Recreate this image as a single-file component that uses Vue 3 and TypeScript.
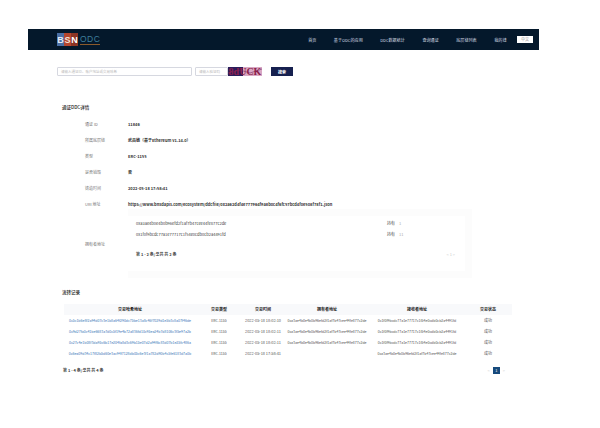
<script setup lang="ts">
const navItems = ['首页', '基于ODC的应用', 'DDC数据统计', '查询通证', '底层链列表', '我的钱']

const fields = [
  { label: '通证 ID', value: '11846' },
  { label: '所属底层链', value: '武昌链（基于Ethereum v1.14.0）' },
  { label: '类型', value: 'ERC-1155' },
  { label: '是否销毁', value: '否' },
  { label: '铸造时间', value: '2022-05-18 17:58:41' },
  { label: 'URI 地址', value: 'https://www.bnsdapis.com/ecosystem/ddcfile/0x2a62d4f4e777964f9a8b0c4f6fc57bcd4f0e508f78f1.json' },
]

const owners = [
  { address: '0xa3ae4b0e4b0b96efd2f1af7b47cee44fe877c2de', count: '1' },
  { address: '0x1f0f9bcdc77a1e77717c1f54e0cdb0cb2a4491fd', count: '11' },
]

const records = [
  { hash: '0x5c1b6e8f2a94d07c3e1b8a64f290dc75be13a8c46f7029d1e5b3c8a07f46de', type: 'ERC-1155', time: '2022-05-18 18:02:10', from: '0xa3ae4b0e4b0b96efd2f1af7b47cee44fe877c2de', to: '0x1f0f9bcdc77a1e77717c1f54e0cdb0cb2a4491fd', status: '成功' },
  { hash: '0x9d27fa0c41be6683a7d0c5f19e4b72a836fd10c95ea24b7d8106c3f5e97a2b', type: 'ERC-1155', time: '2022-05-18 18:02:11', from: '0xa3ae4b0e4b0b96efd2f1af7b47cee44fe877c2de', to: '0x1f0f9bcdc77a1e77717c1f54e0cdb0cb2a4491fd', status: '成功' },
  { hash: '0x27c4e1b08f3da95c6b17e204fa8d3c69b15e07d2a94f6c83d07b1e25fc486a', type: 'ERC-1155', time: '2022-05-18 18:02:11', from: '0xa3ae4b0e4b0b96efd2f1af7b47cee44fe877c2de', to: '0x1f0f9bcdc77a1e77717c1f54e0cdb0cb2a4491fd', status: '成功' },
  { hash: '0x6ea09d34c17f82b5d60e3ac94f7128db05c6e3f1a782d90b4c5fe6183d7a0b', type: 'ERC-1155', time: '2022-05-18 17:58:41', from: '', to: '0xa3ae4b0e4b0b96efd2f1af7b47cee44fe877c2de', status: '成功' },
]
</script>

<template>
  <div class="page">
    <header class="nav">
      <div class="logo">
        <span class="logo-b">B</span><span class="logo-s">S</span><span class="logo-n">N</span>
        <span class="logo-odc">ODC</span>
      </div>
      <nav class="nav-links">
        <a v-for="item in navItems" :key="item">{{ item }}</a>
        <span class="lang">中文</span>
      </nav>
    </header>

    <div class="search">
      <div class="input wide">请输入通证ID、账户地址或交易哈希</div>
      <div class="input short">请输入验证码</div>
      <div class="captcha">
        <svg width="34" height="9" viewBox="0 0 34 9">
          <rect width="34" height="9" fill="#d9a8c4" />
          <rect width="15" height="9" fill="#2b1d5c" />
          <path d="M0 6 L12 3 L22 6 L34 2" stroke="#7a2f6a" stroke-width="0.6" fill="none" />
        </svg>
        <span class="captcha-text">8dUCK</span>
      </div>
      <button class="search-btn">搜索</button>
    </div>

    <section class="detail">
      <h3>通证DDC详情</h3>
      <div v-for="f in fields" :key="f.label" class="field">
        <span class="label">{{ f.label }}</span>
        <span class="value">{{ f.value }}</span>
      </div>
      <div class="owners">
        <span class="label">拥有者地址</span>
        <div class="owners-box">
          <div class="owners-inner">
            <div v-for="o in owners" :key="o.address" class="owner-row">
              <span class="addr">{{ o.address }}</span>
              <span class="count"><b>持有</b>{{ o.count }}</span>
            </div>
            <div class="owners-foot">
              <span class="page-info">第 1 - 2 条/总共 共 2 条</span>
              <span class="pager-dim">&lt; 1 &gt;</span>
            </div>
          </div>
        </div>
      </div>
    </section>

    <section class="records">
      <h3>流转记录</h3>
      <div class="row head">
        <span>交易哈希地址</span>
        <span>交易类型</span>
        <span>交易时间</span>
        <span>拥有者地址</span>
        <span>接收者地址</span>
        <span>交易状态</span>
      </div>
      <div v-for="r in records" :key="r.hash" class="row">
        <span class="hash">{{ r.hash }}</span>
        <span>{{ r.type }}</span>
        <span class="time">{{ r.time }}</span>
        <span>{{ r.from }}</span>
        <span>{{ r.to }}</span>
        <span class="status">{{ r.status }}</span>
      </div>
      <div class="records-foot">
        <span class="page-info">第 1 - 4 条/总共 共 4 条</span>
        <span class="pager">
          <span class="arrow">&lt;</span>
          <span class="current">1</span>
          <span class="arrow">&gt;</span>
        </span>
      </div>
    </section>
  </div>
</template>

<style scoped>
.page {
  width: 600px;
  height: 428px;
  box-sizing: border-box;
  padding: 29px 61px 0 28px;
  overflow: hidden;
  background: #fff;
  font-family: 'Noto Sans CJK SC', 'Liberation Sans', sans-serif;
  font-size: 4px;
  color: #333;
}

.nav {
  height: 21px;
  background: #04182b;
  display: flex;
  align-items: center;
  justify-content: space-between;
  padding: 0 6px 0 29px;
}

.logo {
  display: flex;
  align-items: center;
  font: 700 9px 'Liberation Sans', sans-serif;
  color: #fff;
}

.logo-b {
  width: 7px;
  text-align: center;
  color: #e6ebf4;
  background: #4a6fa5;
  padding: 1.5px 0;
}

.logo-s {
  width: 7px;
  text-align: center;
  color: #f4e2d8;
  background: #b5462e;
  padding: 1.5px 0;
}

.logo-n {
  width: 7px;
  text-align: center;
  color: #fff;
  background: #8c3424;
  padding: 1.5px 0;
}

.logo-odc {
  margin-left: 2px;
  color: #3f7e9c;
  font-weight: 400;
  font-size: 8.5px;
  letter-spacing: 0.5px;
  border-bottom: 0.5px solid #8a5a2c;
}

.nav-links {
  display: flex;
  align-items: center;
  gap: 17.5px;
  color: #d3dae2;
  font-size: 4.1px;
}

.lang {
  width: 16px;
  height: 7px;
  line-height: 7px;
  text-align: center;
  background: #fff;
  color: #999;
  margin-left: -7px;
}

.search {
  display: flex;
  align-items: center;
  height: 9px;
  margin-top: 17px;
  padding-left: 29px;
}

.input {
  box-sizing: border-box;
  height: 9px;
  line-height: 7px;
  padding-left: 3px;
  border: 1px solid #d6d8e0;
  border-radius: 1px;
  color: #bbb;
  font-size: 3.5px;
}

.wide {
  width: 135px;
}

.short {
  width: 33px;
  margin-left: 3px;
}

.captcha {
  position: relative;
  width: 34px;
  height: 9px;
}

.captcha svg {
  display: block;
}

.captcha-text {
  position: absolute;
  inset: 0;
  text-align: center;
  font: 700 10px/9px 'Liberation Serif', serif;
  color: #8c1f4a;
}

.search-btn {
  width: 22px;
  height: 9px;
  margin-left: 9px;
  padding: 0;
  border: 0;
  background: #16204f;
  color: #fff;
  font: 700 4px 'Noto Sans CJK SC', sans-serif;
}

.detail {
  margin-top: 27px;
  padding-left: 34px;
}

h3 {
  margin: 0;
  height: 8px;
  line-height: 8px;
  font-size: 4.5px;
  font-weight: 500;
  color: #222;
}

.field {
  display: flex;
  align-items: center;
  height: 16px;
  padding-left: 23px;
}

.field:first-of-type {
  margin-top: 5px;
}

.label {
  flex: none;
  width: 43px;
  color: #777;
}

.value {
  font-weight: 700;
  color: #333;
  white-space: nowrap;
}

.owners {
  display: flex;
  align-items: center;
  padding-left: 23px;
  margin-top: -3px;
}

.owners-box {
  box-sizing: border-box;
  width: 344px;
  height: 69px;
  padding: 7px 7px 7px 0;
  background: #fcfcfc;
}

.owners-inner {
  height: 100%;
  box-sizing: border-box;
  padding: 2px 0 0 8px;
  background: #fff;
}

.owner-row {
  display: flex;
  justify-content: space-between;
  height: 11px;
  line-height: 11px;
  color: #444;
}

.count {
  width: 78px;
  color: #aaa;
}

.count b {
  color: #666;
  font-weight: 500;
  margin-right: 4px;
}

.owners-foot {
  display: flex;
  justify-content: space-between;
  margin-top: 10.5px;
}

.page-info {
  font-weight: 700;
  color: #444;
}

.pager-dim {
  color: #ccc;
  margin-right: 10px;
}

.records {
  margin-top: 10px;
  padding-left: 34px;
}

.row {
  display: grid;
  grid-template-columns: 132px 46px 42px 86px 94px 48px;
  width: 448px;
  margin-left: 2px;
  height: 11px;
  line-height: 11px;
  text-align: center;
  font-size: 3.5px;
  color: #555;
}

.row span {
  white-space: nowrap;
}

.row .hash {
  color: #3c78b8;
}

.row .time {
  font-size: 3.9px;
}

.row .status {
  font-size: 4px;
}

.head {
  margin-top: 7.5px;
  background: #f8f9fb;
  font-size: 4px;
  font-weight: 700;
  color: #222;
}

.records-foot {
  display: flex;
  align-items: center;
  justify-content: space-between;
  width: 442px;
  height: 9px;
  margin-top: 7px;
  padding-left: 1px;
}

.pager {
  display: flex;
  align-items: center;
  gap: 3px;
}

.arrow {
  color: #ccc;
}

.current {
  width: 7px;
  height: 7px;
  line-height: 7px;
  text-align: center;
  background: #174a7c;
  color: #fff;
}
</style>
